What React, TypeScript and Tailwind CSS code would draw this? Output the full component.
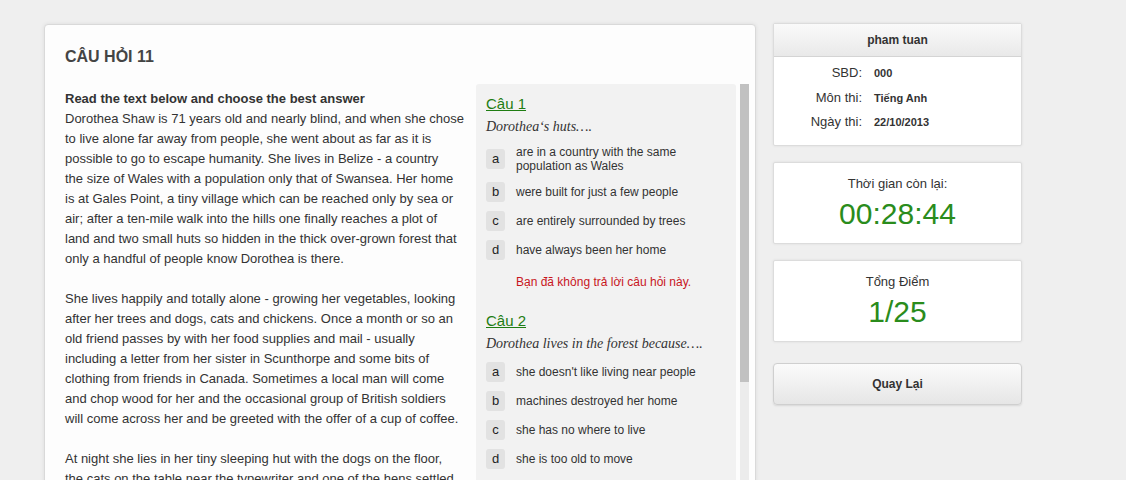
import React from "react";

type Option = { key: string; text: string };
type Question = { title: string; prompt: string; options: Option[]; note?: string };

const questions: Question[] = [
  {
    title: "Câu 1",
    prompt: "Dorothea‘s huts….",
    options: [
      { key: "a", text: "are in a country with the same population as Wales" },
      { key: "b", text: "were built for just a few people" },
      { key: "c", text: "are entirely surrounded by trees" },
      { key: "d", text: "have always been her home" },
    ],
    note: "Bạn đã không trả lời câu hỏi này.",
  },
  {
    title: "Câu 2",
    prompt: "Dorothea lives in the forest because….",
    options: [
      { key: "a", text: "she doesn't like living near people" },
      { key: "b", text: "machines destroyed her home" },
      { key: "c", text: "she has no where to live" },
      { key: "d", text: "she is too old to move" },
    ],
  },
];

// passage split the way the original page wraps it
const passage: string[][] = [
  [
    "Dorothea Shaw is 71 years old and nearly blind, and when she chose",
    "to live alone far away from people, she went about as far as it is",
    "possible to go to escape humanity. She lives in Belize - a country",
    "the size of Wales with a population only that of Swansea. Her home",
    "is at Gales Point, a tiny village which can be reached only by sea or",
    "air; after a ten-mile walk into the hills one finally reaches a plot of",
    "land and two small huts so hidden in the thick over-grown forest that",
    "only a handful of people know Dorothea is there.",
  ],
  [
    "She lives happily and totally alone - growing her vegetables, looking",
    "after her trees and dogs, cats and chickens. Once a month or so an",
    "old friend passes by with her food supplies and mail - usually",
    "including a letter from her sister in Scunthorpe and some bits of",
    "clothing from friends in Canada. Sometimes a local man will come",
    "and chop wood for her and the occasional group of British soldiers",
    "will come across her and be greeted with the offer of a cup of coffee.",
  ],
  [
    "At night she lies in her tiny sleeping hut with the dogs on the floor,",
    "the cats on the table near the typewriter and one of the hens settled",
    "on the end of her bed.",
  ],
];

const QuestionBlock = ({ q }: { q: Question }) => {
  return (
    <div className="mb-[21px]">
      <a href="#" className="block text-[15px] leading-[20px] text-[#1f7d12] underline">
        {q.title}
      </a>
      <div className="mt-[3px] font-['Liberation_Serif',serif] text-[14px] italic leading-[20px] text-[#333]">
        {q.prompt}
      </div>
      <div className="mt-[8px] flex flex-col gap-[9px]">
        {q.options.map((o) => (
          <div key={o.key} className="flex items-center">
            <span className="flex h-[20px] w-[19px] shrink-0 items-center justify-center rounded-[3px] bg-[#e2e2e2] text-[13px] text-[#222]">
              {o.key}
            </span>
            <span className="ml-[11px] w-[200px] text-[12px] leading-[14px] text-[#333]">{o.text}</span>
          </div>
        ))}
      </div>
      {q.note && (
        <div className="mt-[14px] pl-[30px] text-[12px] leading-[16px] text-[#c8161d]">{q.note}</div>
      )}
    </div>
  );
};

export default function App() {
  return (
    <div className="min-h-screen bg-[#efefef] pl-[44px] pt-[23px] font-['Liberation_Sans',Arial,sans-serif] text-[#333]">
      <div className="flex items-start gap-[17px]">
        {/* Main card */}
        <div className="mt-[1px] h-[560px] w-[712px] rounded-[4px] border border-[#d9d9d9] bg-[#fdfdfd] pl-[20px] pr-[6px] pt-[22px] shadow-[0_0_4px_rgba(0,0,0,0.08)]">
          <h2 className="text-[16px] font-bold leading-[20px] text-[#444]">CÂU HỎI 11</h2>
          <div className="mt-[17px] flex">
            {/* Passage */}
            <div className="w-[402px] pt-[5px] text-[13px] leading-[20px] text-[#333]">
              <p className="font-bold">Read the text below and choose the best answer</p>
              {passage.map((lines, i) => (
                <p key={i} className={i > 0 ? "mt-[20px]" : ""}>
                  {lines.map((l) => (
                    <span key={l} className="block whitespace-nowrap">
                      {l}
                    </span>
                  ))}
                </p>
              ))}
            </div>

            {/* Questions panel */}
            <div className="ml-[9px] flex h-[480px]">
              <div className="w-[260px] overflow-hidden rounded-t-[3px] bg-[#f2f2f2] pl-[10px] pt-[10px]">
                {questions.map((q) => (
                  <QuestionBlock key={q.title} q={q} />
                ))}
              </div>
              <div className="ml-[4px] w-[9px] bg-[#ececec]">
                <div className="h-[298px] bg-[#c1c1c1]" />
              </div>
            </div>
          </div>
        </div>

        {/* Sidebar */}
        <div className="flex w-[249px] flex-col">
          <div className="rounded-[2px] border border-[#dcdcdc] bg-white shadow-[0_0_3px_rgba(0,0,0,0.08)]">
            <div className="flex h-[33px] items-center justify-center border-b border-[#d4d4d4] bg-gradient-to-b from-[#fafafa] to-[#e9e9e9] text-[12px] font-bold text-[#333]">
              pham tuan
            </div>
            <div className="flex flex-col gap-[8.5px] pb-[15px] pt-[8px]">
              {[
                ["SBD:", "000"],
                ["Môn thi:", "Tiếng Anh"],
                ["Ngày thi:", "22/10/2013"],
              ].map(([k, v]) => (
                <div key={k} className="flex items-center leading-[16px]">
                  <span className="w-[88px] text-right text-[13px] text-[#333]">{k}</span>
                  <span className="ml-[12px] text-[11px] font-bold text-[#333]">{v}</span>
                </div>
              ))}
            </div>
          </div>

          <div className="mt-[16px] flex h-[82px] flex-col items-center rounded-[2px] border border-[#dcdcdc] bg-white pt-[12px] shadow-[0_0_3px_rgba(0,0,0,0.08)]">
            <div className="text-[13px] leading-[18px] text-[#333]">Thời gian còn lại:</div>
            <div className="mt-[4px] text-[30px] leading-[34px] text-[#2a8c1c]">00:28:44</div>
          </div>

          <div className="mt-[16px] flex h-[82px] flex-col items-center rounded-[2px] border border-[#dcdcdc] bg-white pt-[12px] shadow-[0_0_3px_rgba(0,0,0,0.08)]">
            <div className="text-[13px] leading-[18px] text-[#333]">Tổng Điểm</div>
            <div className="mt-[4px] text-[30px] leading-[34px] text-[#2a8c1c]">1/25</div>
          </div>

          <button className="mt-[21px] h-[42px] rounded-[4px] border border-[#cfcfcf] bg-gradient-to-b from-[#fbfbfb] to-[#e6e6e6] text-[12px] font-bold text-[#333] shadow-[0_1px_2px_rgba(0,0,0,0.1)]">
            Quay Lại
          </button>
        </div>
      </div>
    </div>
  );
}
